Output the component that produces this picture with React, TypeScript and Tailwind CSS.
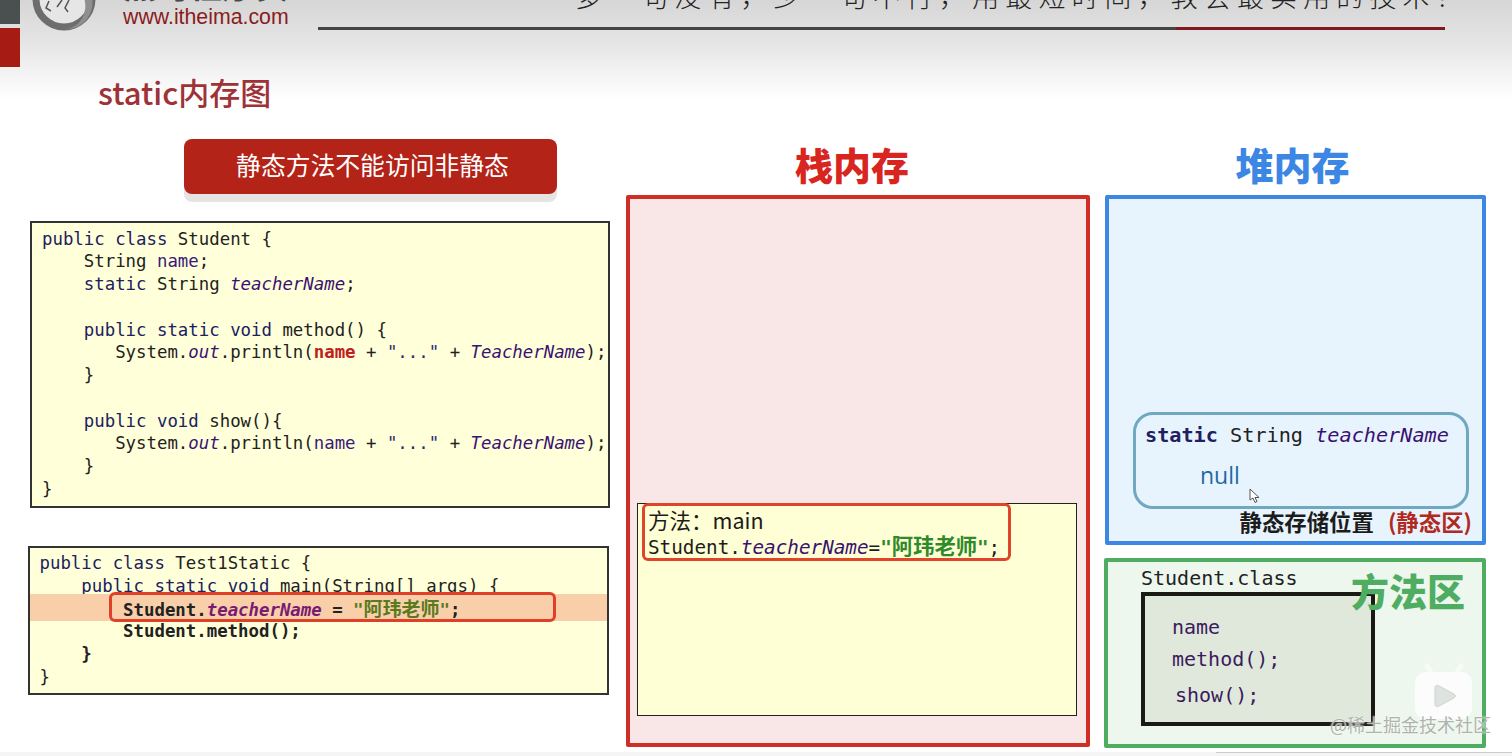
const mono = "font-['DejaVu_Sans_Mono','Noto_Sans_CJK_SC',monospace]";
const cjk = "font-['Noto_Sans_CJK_SC','Noto_Sans',sans-serif]";

function Kw({ children }: { children: React.ReactNode }) {
  return <span className="text-[#20205f]">{children}</span>;
}

function Field({ children }: { children: React.ReactNode }) {
  return <span className="text-[#3a1b78]">{children}</span>;
}

function Static({ children }: { children: React.ReactNode }) {
  return <span className="italic text-[#3a1272]">{children}</span>;
}

function Line({ children }: { children?: React.ReactNode }) {
  return <div className="h-[22.75px] leading-[22.75px] whitespace-pre">{children}</div>;
}

function PrintLine({ hot }: { hot?: boolean }) {
  return (
    <Line>
      {'       System.'}
      <Static>out</Static>
      {'.println('}
      {hot ? <span className="font-bold text-[#c0201e]">name</span> : <Field>name</Field>}
      {' + '}
      <span className="text-[#2a2a70]">"..."</span>
      {' + '}
      <Static>TeacherName</Static>
      {');'}
    </Line>
  );
}

function Header() {
  return (
    <div className="flex h-[31px] items-start">
      <svg width="70" height="32" viewBox="0 0 70 32" className="ml-[12px] shrink-0">
        <circle cx="32" cy="-1" r="28" fill="#e6e6e6" stroke="#6d6d6d" strokeWidth="7" />
        <path d="M52 -2 A 21 23 0 0 1 34 29 A 26 26 0 0 0 60 -2 Z" fill="#8f8f8f" />
        <path d="M17 1 L14 8 L19 11 M37 0 L33 8 L36 12 M30 0 L25 7" fill="none" stroke="#555" strokeWidth="1.5" />
      </svg>
      <div className="ml-[21px] w-[170px] shrink-0 overflow-hidden">
        <div className={`${cjk} -mt-[35px] h-[39px] text-[33px] leading-[39px] font-bold whitespace-nowrap text-[#4a4a4a]`}>
          黑马程序员
        </div>
        <div className="mt-[1px] font-['Liberation_Sans',sans-serif] text-[21.3px] leading-[24px] whitespace-nowrap text-[#8a1c20]">
          www.itheima.com
        </div>
      </div>
      <div className="ml-[25px] flex-1">
        <div className="h-[27px] overflow-hidden">
          <div
            className={`${cjk} -mt-[24px] ml-[257px] text-[27px] leading-[40px] font-light tracking-[6.1px] whitespace-nowrap text-[#222]`}
          >
            多一句没有，少一句不行，用最短时间，教会最实用的技术！
          </div>
        </div>
        <div className="flex h-[3px] w-[1127px]">
          <div className="flex-1 bg-[#444444]" />
          <div className="w-[269px] bg-[#7d1a1e]" />
        </div>
      </div>
    </div>
  );
}

function LeftColumn() {
  return (
    <div className="w-[582px] shrink-0">
      <div
        className={`${cjk} ml-[156px] flex h-[55px] w-[373px] items-center justify-center rounded-[8px] bg-[#b32317] pb-[3px] pl-[4px] text-[24.8px] text-white shadow-[0_8px_0_#e6e3e3]`}
      >
        静态方法不能访问非静态
      </div>

      <div className={`${mono} mt-[27px] ml-[2px] h-[287px] w-[580px] border-2 border-[#333] bg-[#ffffd9] pt-[4.5px] pl-[10px] text-[17.37px] text-[#222]`}>
        <Line>
          <Kw>public class</Kw> Student {'{'}
        </Line>
        <Line>
          {'    String '}
          <Field>name</Field>;
        </Line>
        <Line>
          {'    '}
          <Kw>static</Kw> String <Static>teacherName</Static>;
        </Line>
        <Line />
        <Line>
          {'    '}
          <Kw>public static void</Kw> method() {'{'}
        </Line>
        <PrintLine hot />
        <Line>{'    }'}</Line>
        <Line />
        <Line>
          {'    '}
          <Kw>public void</Kw> show(){'{'}
        </Line>
        <PrintLine />
        <Line>{'    }'}</Line>
        <Line>{'}'}</Line>
      </div>

      <div className={`${mono} relative mt-[38px] h-[149px] w-[581px] border-2 border-[#333] bg-[#ffffd9] pt-[4px] pl-[9.5px] text-[17.37px] text-[#222]`}>
        <Line>
          <Kw>public class</Kw> Test1Static {'{'}
        </Line>
        <Line>
          {'    '}
          <Kw>public static void</Kw> main(String[] args) {'{'}
        </Line>
        <div className="relative">
          <div className="absolute -top-[4px] right-0 -left-[10px] h-[27px] bg-[#f8cfa8]" />
          <div className="absolute -top-[6px] left-[69px] h-[30px] w-[447px] rounded-[6px] border-[3px] border-[#e0402a]" />
          <div className="relative h-[22.75px] leading-[22.75px] font-bold whitespace-pre">
            {'        Student.'}
            <span className="italic text-[#7a1a72]">teacherName</span>
            {' = '}
            <span className="text-[#5a7a1e]">
              "<span className="text-[19px]">阿玮老师</span>"
            </span>
            ;
          </div>
        </div>
        <div className="font-bold">
          <Line>{'        Student.method();'}</Line>
          <Line>{'    }'}</Line>
        </div>
        <Line>{'}'}</Line>
      </div>
    </div>
  );
}

function StackColumn() {
  return (
    <div className="ml-[16px] w-[464px] shrink-0">
      <div className={`${cjk} h-[56px] pr-[12px] text-center text-[38px] leading-[50px] font-black text-[#d9251f]`}>栈内存</div>
      <div className="flex h-[552px] flex-col justify-end rounded-[2px] border-4 border-[#cf2e26] bg-[#f9e6e6] pb-[27px] pl-[7px]">
        <div className="h-[213px] w-[440px] border border-[#222] bg-[#ffffd5]">
          <div className={`${mono} -mt-px ml-[4px] h-[58px] w-[369px] rounded-[6px] border-[3px] border-[#e0452c] pl-[3px] text-[19.3px] whitespace-pre text-[#1c1c1c]`}>
            <div className={`${cjk} mt-[1px] h-[25px] text-[21.5px] leading-[26px] text-[#1c1c1c]`}>方法：main</div>
            <div className="h-[26px] leading-[26px]">
              Student.<span className="italic text-[#3a1272]">teacherName</span>=
              <span className="font-bold text-[#2f8a2c]">
                "<span className={`${cjk} text-[21.3px]`}>阿玮老师</span>"
              </span>
              ;
            </div>
          </div>
        </div>
      </div>
    </div>
  );
}

function HeapColumn() {
  return (
    <div className="ml-[15px] w-[381px] shrink-0">
      <div className={`${cjk} h-[56px] pr-[6px] text-center text-[38px] leading-[50px] font-black text-[#3c86e4]`}>堆内存</div>
      <div className="flex h-[350px] flex-col justify-end rounded-[2px] border-4 border-[#3c86e4] bg-[#e8f4fd]">
        <div className="relative ml-[24px] h-[97px] w-[336px] rounded-[20px] border-[3px] border-[#6fa8bf] pt-[7px] pl-[9px]">
          <div className={`${mono} h-[26px] text-[20.2px] leading-[26px] whitespace-pre text-[#222]`}>
            <span className="font-bold text-[#20205f]">static</span> String <span className="italic text-[#3a1272]">teacherName</span>
          </div>
          <div className="mt-[13px] ml-[55px] font-['Open_Sans',sans-serif] text-[23px] leading-[28px] text-[#1d6aa5]">null</div>
          <svg width="12" height="16" viewBox="0 0 12 16" className="absolute top-[73px] left-[113px]">
            <path d="M1 1 L1 12 L4 10 L6 14.5 L8 13.5 L6 9.5 L10 9.5 Z" fill="#ffffff" stroke="#555" strokeWidth="1" />
          </svg>
        </div>
        <div className={`${cjk} flex h-[32px] items-center justify-end pr-[10px] pb-[8px] text-[22.4px] leading-[24px] font-bold text-[#1c1c1c]`}>
          静态存储位置
          <span className="ml-[14px] text-[#b02a22]">(静态区)</span>
        </div>
      </div>
      <div className="relative mt-[13px] h-[190px] w-[382px] -translate-x-px rounded-[2px] border-4 border-[#4fad62] bg-[#edf7ee] pt-[4px] pl-[33px]">
        <div className={`${mono} h-[24px] text-[20px] leading-[24px] text-[#222]`}>Student.class</div>
        <div className={`${mono} mt-[2px] h-[134px] w-[234px] border-4 border-[#1a1a14] bg-[#e0e8dc] pl-[27px] text-[20px] leading-[24px] text-[#3a1b5c]`}>
          <div className="mt-[19px] h-[24px]">name</div>
          <div className="mt-[8px] h-[24px]">method();</div>
          <div className="mt-[12px] ml-[3px] h-[24px]">show();</div>
        </div>
        <div className={`${cjk} absolute top-[6px] right-[17px] text-[38px] leading-[44px] font-black text-[#4fad62]`}>方法区</div>
      </div>
    </div>
  );
}

function Watermark() {
  return (
    <>
      <svg width="60" height="58" viewBox="0 0 60 58" className="absolute top-[663px] left-[1414px]">
        <path d="M18 11 L13 3 M42 11 L47 3" stroke="#f7faf7" strokeWidth="5" strokeLinecap="round" />
        <rect x="1" y="9" width="57" height="47" rx="11" fill="#fbfcfb" />
        <path d="M21 25 Q21 21 25 23 L40 31 Q43 33 40 35 L25 43 Q21 45 21 41 Z" fill="#dfe3df" stroke="#cfd4cf" strokeWidth="1" />
      </svg>
      <div
        className={`${cjk} absolute top-[712px] left-[1330px] text-[18px] leading-[24px] whitespace-nowrap text-[#aeb3ae] [text-shadow:0_0_2px_#ffffff]`}
      >
        @稀土掘金技术社区
      </div>
    </>
  );
}

export default function App() {
  return (
    <div className="relative flex h-[756px] w-[1512px] flex-col overflow-hidden bg-[linear-gradient(180deg,#d6d6d6_0px,#e4e4e4_40px,#ffffff_100px)]">
      <div className="flex h-[139px] shrink-0 items-start">
        <div className="flex w-[20px] shrink-0 flex-col gap-[4px]">
          <div className="h-[24px] bg-[#4a4f50]" />
          <div className="h-[39px] bg-[#a61c14]" />
        </div>
        <div className="flex-1">
          <Header />
          <div className={`${cjk} mt-[39px] ml-[78px] text-[31px] leading-[44px] font-medium text-[#9e3237]`}>static内存图</div>
        </div>
      </div>
      <div className="flex pl-[28px]">
        <LeftColumn />
        <StackColumn />
        <HeapColumn />
      </div>
      <div className="mt-auto flex h-[4px] justify-end bg-[#f5f5f5]">
        <div className="h-[1px] w-[296px] bg-[#cfc8c8]" />
      </div>
      <Watermark />
    </div>
  );
}
